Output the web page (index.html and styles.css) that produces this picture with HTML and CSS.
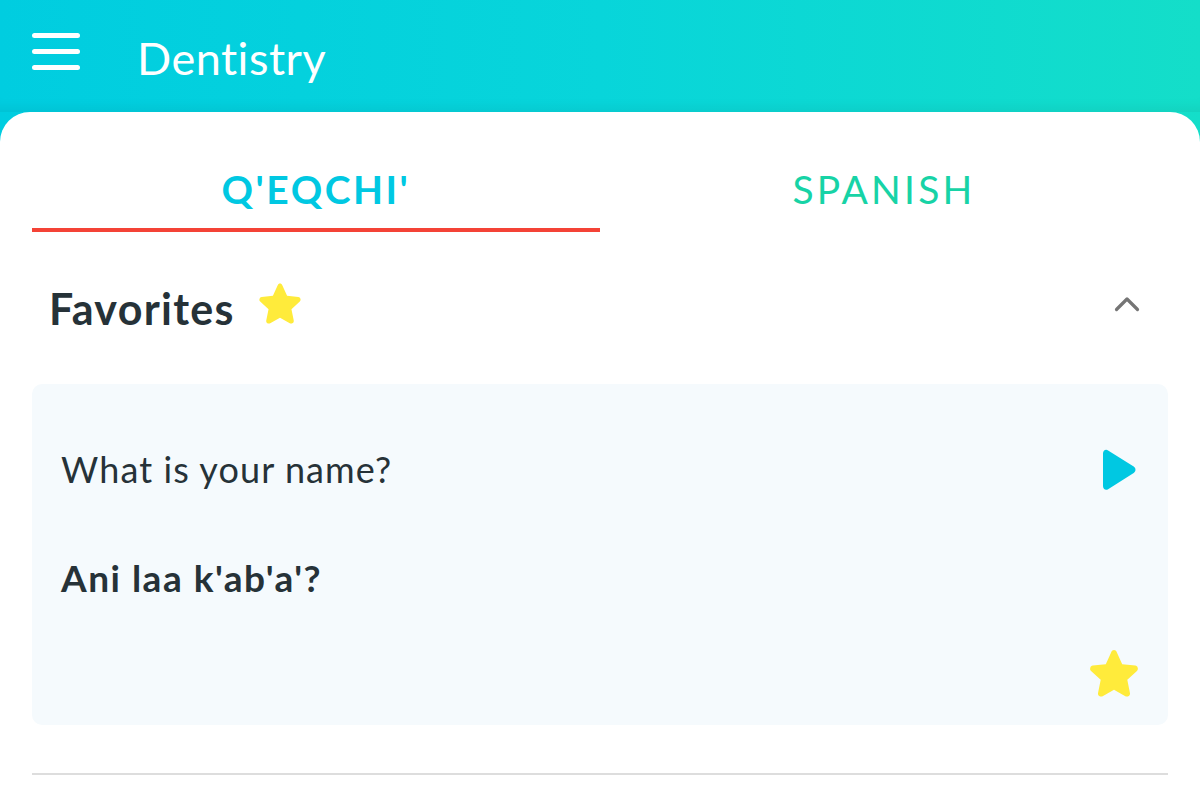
FILE: index.html
```html
<!DOCTYPE html>
<html>
<head>
<meta charset="utf-8">
<link rel="stylesheet" href="styles.css">
</head>
<body>
<div class="app">
  <header class="topbar">
    <svg class="menu" width="48" height="38" viewBox="0 0 48 38">
      <rect x="0" y="0" width="48" height="5" rx="2.5" fill="#fff"/>
      <rect x="0" y="16" width="48" height="5" rx="2.5" fill="#fff"/>
      <rect x="0" y="32" width="48" height="5" rx="2.5" fill="#fff"/>
    </svg>
    <h1 class="title">Dentistry</h1>
  </header>
  <main class="panel">
    <nav class="tabs">
      <div class="tab active">Q'EQCHI'</div>
      <div class="tab">SPANISH</div>
    </nav>
    <section class="section-head">
      <h2 class="section-title">Favorites</h2>
      <svg class="star-small" width="50" height="48" viewBox="0 0 24 23">
        <path d="M12 1.2c.5 0 .9.3 1.1.8l2.3 5 5.4.6c.5.1.9.4 1 .9.2.5 0 1-.3 1.3l-4 3.7 1.1 5.4c.1.5-.1 1-.5 1.3-.4.3-1 .3-1.4.1L12 17.6l-4.7 2.7c-.4.2-1 .2-1.4-.1-.4-.3-.6-.8-.5-1.3l1.1-5.4-4-3.7c-.4-.3-.5-.8-.3-1.3.1-.5.5-.8 1-.9l5.4-.6 2.3-5c.2-.5.6-.8 1.1-.8z" fill="#FFEB3B"/>
      </svg>
      <svg class="chevron" width="26" height="16" viewBox="0 0 26 16">
        <path d="M2.5 13.5 L13 3 L23.5 13.5" fill="none" stroke="#757575" stroke-width="3.2" stroke-linecap="round" stroke-linejoin="round"/>
      </svg>
    </section>
    <article class="card">
      <div class="card-row">
        <p class="phrase">What is your name?</p>
        <svg class="play" width="36" height="44" viewBox="0 0 36 44">
          <path d="M2 5.5c0-3 2.6-4.6 5.1-3.1l25.6 16.1c2.4 1.5 2.4 5 0 6.5L7.1 41.2C4.6 42.7 2 41.1 2 38.1z" fill="#00C8E2"/>
        </svg>
      </div>
      <p class="translation">Ani laa k'ab'a'?</p>
      <div class="card-foot">
        <svg class="star" width="58" height="56" viewBox="0 0 24 23">
          <path d="M12 1.2c.5 0 .9.3 1.1.8l2.3 5 5.4.6c.5.1.9.4 1 .9.2.5 0 1-.3 1.3l-4 3.7 1.1 5.4c.1.5-.1 1-.5 1.3-.4.3-1 .3-1.4.1L12 17.6l-4.7 2.7c-.4.2-1 .2-1.4-.1-.4-.3-.6-.8-.5-1.3l1.1-5.4-4-3.7c-.4-.3-.5-.8-.3-1.3.1-.5.5-.8 1-.9l5.4-.6 2.3-5c.2-.5.6-.8 1.1-.8z" fill="#FFEB3B"/>
        </svg>
      </div>
    </article>
    <hr class="divider">
  </main>
</div>
</body>
</html>
```
FILE: styles.css
```css
* { box-sizing: border-box; }
html, body { margin: 0; padding: 0; }
body {
  width: 1200px;
  height: 800px;
  overflow: hidden;
  font-family: "Lato", "Noto Sans", sans-serif;
  color: #263238;
  background: #fff;
}
.app {
  height: 800px;
  background: linear-gradient(90deg, #00CDE0 0%, #08D5DA 50%, #14DEC9 100%);
  display: flex;
  flex-direction: column;
}
.topbar {
  height: 112px;
  display: flex;
  align-items: center;
  padding: 0 0 0 32px;
  box-shadow: inset 0 -14px 14px -12px rgba(0, 0, 0, 0.08);
}
.menu { display: block; margin-top: -8px; }
.title {
  margin: 0 0 0 57px;
  font-weight: 400;
  font-size: 45px;
  color: #fff;
  margin-top: 4px;
  letter-spacing: 0.5px;
}
.panel {
  flex: 1;
  background: #fff;
  border-radius: 30px 30px 0 0;
  padding: 0 32px;
}
.tabs {
  display: flex;
  height: 120px;
}
.tab {
  flex: 1;
  display: flex;
  align-items: flex-end;
  justify-content: center;
  font-size: 39px;
  letter-spacing: 2.5px;
  color: #17D3A6;
  font-weight: 400;
  padding-bottom: 19px;
  border-bottom: 4px solid transparent;
  height: 120px;
  line-height: 1;
}
.tab + .tab { letter-spacing: 3.2px; }
.tab.active {
  color: #00C8E2;
  font-weight: 700;
  border-bottom-color: #F44336;
}
.section-head {
  display: flex;
  align-items: center;
  height: 152px;
  padding: 0 28px 0 17px;
}
.section-title {
  margin: 0;
  font-size: 43px;
  font-weight: 700;
  letter-spacing: 1.3px;
  color: #263238;
}
.star-small { margin-left: 20px; margin-top: -6px; }
.chevron { margin-left: auto; margin-top: -8px; }
.card {
  background: #F5FAFD;
  border-radius: 10px;
  height: 341px;
  padding: 0 30px 0 29px;
  display: flex;
  flex-direction: column;
}
.card-row {
  display: flex;
  align-items: center;
  justify-content: space-between;
  height: 170px;
}
.phrase {
  margin: 0;
  font-size: 36px;
  font-weight: 400;
  letter-spacing: 1.1px;
}
.play { margin-right: 1px; margin-top: 1px; }
.translation {
  margin: 0;
  margin-top: 1px;
  font-size: 37px;
  font-weight: 700;
  letter-spacing: 1.5px;
}
.card-foot {
  margin-top: auto;
  display: flex;
  justify-content: flex-end;
  padding-bottom: 22px;
}
.star { margin-right: -5px; }
.divider {
  margin: 48px 0 0;
  border: 0;
  border-top: 2px solid #DDDDDD;
}
```
